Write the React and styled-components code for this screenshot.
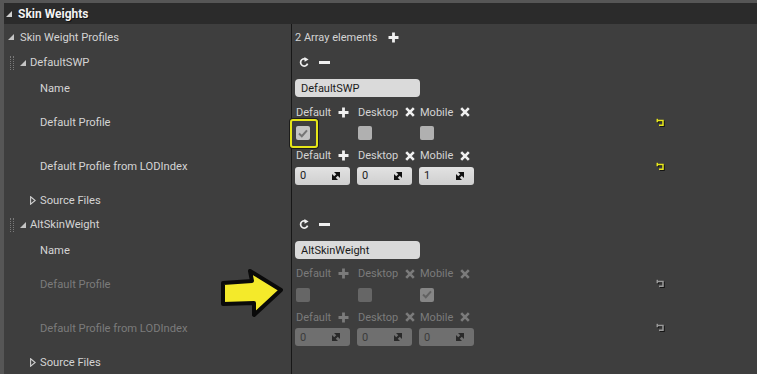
import React from 'react';
import styled, { createGlobalStyle } from 'styled-components';

const GlobalStyle = createGlobalStyle`
  body {
    margin: 0;
    background: #3e3e3e;
    font-family: Roboto, "Liberation Sans", sans-serif;
    -webkit-font-smoothing: antialiased;
  }
  svg { flex-shrink: 0; }
`;

const Page = styled.div`
  position: relative;
  width: 757px;
  height: 374px;
  overflow: hidden;
`;

const Panel = styled.div`
  height: 100%;
  box-sizing: border-box;
  border-left: 4px solid #565656;
  border-top: 3px solid #565656;
  background: #3e3e3e;
`;

const Header = styled.div`
  display: flex;
  align-items: center;
  height: 21px;
  padding-left: 2px;
  gap: 6px;
  background: #2b2b2b;
  color: #f2f2f2;
  font-size: 12px;
  font-weight: 700;
  text-shadow: 1px 1px 0 #111;
`;

const Row = styled.div`
  display: grid;
  grid-template-columns: 287px 1fr;
  height: ${p => p.h}px;
`;

const LabelCell = styled.div`
  display: flex;
  align-items: center;
  padding-left: ${p => p.indent}px;
  color: ${p => (p.dim ? '#7b7b7b' : '#d4d4d4')};
  font-size: 11.2px;
  white-space: nowrap;
`;

const ValueCell = styled.div`
  display: flex;
  align-items: center;
  border-left: 1px solid #171717;
  padding: 0 91px 0 3px;
  color: #d4d4d4;
  font-size: 11px;
`;

const Grip = styled.span`
  width: 2px;
  height: 14px;
  margin-right: 6px;
  border-left: 1px dotted #7a7a7a;
  border-right: 1px dotted #7a7a7a;
`;

const CaretBox = styled.span`
  display: inline-flex;
  width: 6px;
  margin-right: ${p => p.gap}px;
`;

const Stack = styled.div`
  display: flex;
  flex-direction: column;
  gap: ${p => p.gap}px;
`;

const Cols = styled.div`
  display: grid;
  grid-template-columns: repeat(3, 55px);
  column-gap: 7px;
  align-items: center;
`;

const ColLabel = styled.div`
  display: flex;
  align-items: center;
  gap: 7px;
  height: 14px;
  margin-left: 1px;
  white-space: nowrap;
  color: ${p => (p.dim ? '#7b7b7b' : '#d4d4d4')};
  font-size: 11px;
`;

const Check = styled.span`
  position: relative;
  display: flex;
  align-items: center;
  justify-content: center;
  width: 14px;
  height: 14px;
  margin-left: 1px;
  border-radius: 2px;
  background: ${p => (p.dim ? (p.on ? '#868686' : '#666') : p.on ? '#c3c3c3' : '#b0b0b0')};

  &::after {
    content: '';
    display: ${p => (p.hl ? 'block' : 'none')};
    position: absolute;
    left: -6px;
    top: -7px;
    right: -8px;
    bottom: -8px;
    border: 2px solid #e6e617;
    border-radius: 3px;
    box-shadow: 0 0 0 1px #1c1c1c;
  }
`;

const TextBox = styled.div`
  display: flex;
  align-items: center;
  width: 125px;
  height: 18px;
  box-sizing: border-box;
  padding-left: 6px;
  border-radius: 4px;
  background: #dadada;
  color: #1b1b1b;
  font-size: 11px;
`;

const NumBox = styled.div`
  display: flex;
  align-items: center;
  justify-content: space-between;
  height: 18px;
  box-sizing: border-box;
  padding: 0 10px 0 5px;
  border-radius: 3px;
  background: ${p => (p.dim ? '#6f6f6f' : 'linear-gradient(#e2e2e2, #cfcfcf)')};
  color: ${p => (p.dim ? '#3b3b3b' : '#1b1b1b')};
  font-size: 11px;
`;

const Tools = styled.div`
  display: flex;
  align-items: center;
  gap: 9px;
  padding-left: 4px;
`;

const ArrayInfo = styled.div`
  display: flex;
  align-items: center;
  gap: 11px;
`;

const ResetSlot = styled.span`
  display: inline-flex;
  margin-left: auto;
`;

const Pointer = styled.svg`
  position: absolute;
  left: 218px;
  top: 266px;
`;

const Expanded = ({ color = '#c4c4c4' }) => (
  <svg width="6" height="6" viewBox="0 0 6 6"><polygon points="0,6 6,6 6,0" fill={color} /></svg>
);

const Collapsed = () => (
  <svg width="6" height="9" viewBox="0 0 6 9"><polygon points="0.6,0.8 5.2,4.5 0.6,8.2" fill="none" stroke="#cfcfcf" strokeWidth="1.1" /></svg>
);

const Plus = ({ color }) => (
  <svg width="11" height="11" viewBox="0 0 11 11">
    <path d="M5.5 0.5 V10.5 M0.5 5.5 H10.5" stroke={color} strokeWidth="2.8" />
  </svg>
);

const Cross = ({ color }) => (
  <svg width="10" height="10" viewBox="0 0 10 10">
    <path d="M1.2 1.2 L8.8 8.8 M8.8 1.2 L1.2 8.8" stroke={color} strokeWidth="2.6" />
  </svg>
);

const Minus = () => (
  <svg width="11" height="3" viewBox="0 0 11 3"><rect width="11" height="3" fill="#f0f0f0" /></svg>
);

const Refresh = () => (
  <svg width="11" height="11" viewBox="0 0 11 11">
    <path d="M8.6 6.6 A3.6 3.6 0 1 1 6.8 2.2" fill="none" stroke="#f0f0f0" strokeWidth="1.7" />
    <polygon points="5.4,0 9.6,2.4 5.6,4.8" fill="#f0f0f0" />
  </svg>
);

const Tick = ({ color }) => (
  <svg width="10" height="9" viewBox="0 0 10 9">
    <path d="M1 4.6 L3.8 7.2 L9 1.4" fill="none" stroke={color} strokeWidth="2" />
  </svg>
);

const Spin = ({ color }) => (
  <svg width="8" height="8" viewBox="0 0 8 8">
    <polygon points="2,0 8,0 8,6" fill={color} />
    <polygon points="0,2 0,8 6,8" fill={color} />
    <path d="M1 7 L7 1" stroke={color} strokeWidth="2.2" />
  </svg>
);

const Reset = ({ dim }) => {
  const c = dim ? '#9a9a9a' : '#e8e81a';
  return (
    <svg width="10" height="10" viewBox="0 0 10 10">
      <g stroke="#151515" strokeWidth="1.5" fill="none" transform="translate(1 1)">
        <path d="M1 2.5 H7 V7.2 H3" />
        <path d="M1.3 0.8 V4.2" />
      </g>
      <g stroke={c} strokeWidth="1.5" fill="none">
        <path d="M1 2.5 H7 V7.2 H3" />
        <path d="M1.3 0.8 V4.2" />
      </g>
    </svg>
  );
};

const platforms = [
  { name: 'Default', icon: 'plus' },
  { name: 'Desktop', icon: 'cross' },
  { name: 'Mobile', icon: 'cross' },
];

const profiles = [
  { name: 'DefaultSWP', dim: false, checks: [true, false, false], lods: ['0', '0', '1'], highlight: true, heights: [25, 26, 43, 45, 22] },
  { name: 'AltSkinWeight', dim: true, checks: [false, false, true], lods: ['0', '0', '0'], highlight: false, heights: [27, 24, 44, 44, 24] },
];

function PlatformLabels({ dim }) {
  const c = dim ? '#7b7b7b' : '#f0f0f0';
  return (
    <Cols>
      {platforms.map(p => (
        <ColLabel key={p.name} dim={dim}>
          {p.name}
          {p.icon === 'plus' ? <Plus color={c} /> : <Cross color={c} />}
        </ColLabel>
      ))}
    </Cols>
  );
}

function Profile({ data }) {
  const { name, dim, checks, lods, highlight, heights } = data;
  return (
    <>
      <Row h={heights[0]}>
        <LabelCell indent={6}>
          <Grip />
          <CaretBox gap={4}><Expanded /></CaretBox>
          {name}
        </LabelCell>
        <ValueCell>
          <Tools><Refresh /><Minus /></Tools>
        </ValueCell>
      </Row>
      <Row h={heights[1]}>
        <LabelCell indent={36}>Name</LabelCell>
        <ValueCell><TextBox>{name}</TextBox></ValueCell>
      </Row>
      <Row h={heights[2]}>
        <LabelCell indent={36} dim={dim}>Default Profile</LabelCell>
        <ValueCell>
          <Stack gap={7}>
            <PlatformLabels dim={dim} />
            <Cols>
              {checks.map((on, i) => (
                <Check key={i} on={on} dim={dim} hl={highlight && i === 0}>
                  {on && <Tick color={dim ? '#626262' : '#757575'} />}
                </Check>
              ))}
            </Cols>
          </Stack>
          <ResetSlot><Reset dim={dim} /></ResetSlot>
        </ValueCell>
      </Row>
      <Row h={heights[3]}>
        <LabelCell indent={36} dim={dim}>Default Profile from LODIndex</LabelCell>
        <ValueCell>
          <Stack gap={4}>
            <PlatformLabels dim={dim} />
            <Cols>
              {lods.map((v, i) => (
                <NumBox key={i} dim={dim}>
                  {v}
                  <Spin color={dim ? '#2a2a2a' : '#111'} />
                </NumBox>
              ))}
            </Cols>
          </Stack>
          <ResetSlot><Reset dim={dim} /></ResetSlot>
        </ValueCell>
      </Row>
      <Row h={heights[4]}>
        <LabelCell indent={26}>
          <CaretBox gap={4}><Collapsed /></CaretBox>
          Source Files
        </LabelCell>
        <ValueCell />
      </Row>
    </>
  );
}

export default function App() {
  return (
    <Page>
      <GlobalStyle />
      <Panel>
        <Header>
          <Expanded color="#d0d0d0" />
          Skin Weights
        </Header>
        <Row h={26}>
          <LabelCell indent={4}>
            <CaretBox gap={6}><Expanded /></CaretBox>
            Skin Weight Profiles
          </LabelCell>
          <ValueCell>
            <ArrayInfo>
              2 Array elements
              <Plus color="#f0f0f0" />
            </ArrayInfo>
          </ValueCell>
        </Row>
        {profiles.map(p => <Profile key={p.name} data={p} />)}
      </Panel>
      <Pointer width="68" height="54" viewBox="0 0 68 54">
        <polygon
          points="5,17 34,15 32,5 63,24 36,49 36,37 5,38"
          fill="#f4ea2a"
          stroke="#0a0a0a"
          strokeWidth="4"
          strokeLinejoin="round"
        />
      </Pointer>
    </Page>
  );
}
